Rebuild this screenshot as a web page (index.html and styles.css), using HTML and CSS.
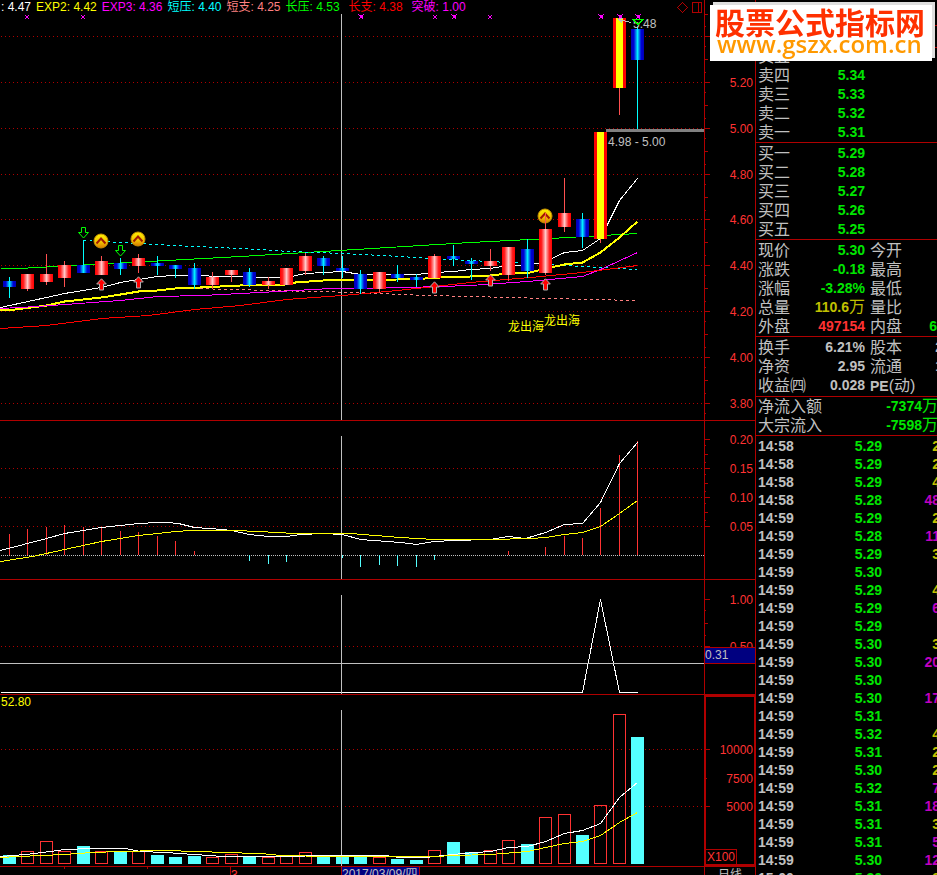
FILE: index.html
```html
<!DOCTYPE html>
<html lang="zh-CN">
<head>
<meta charset="utf-8">
<title>日线</title>
<link rel="stylesheet" href="styles.css">
</head>
<body>
<div class="app">
  <main class="charts">
    <section class="panel">
      <div class="legend">
        <span class="c-white">: 4.47</span>
        <span class="c-yellow">EXP2: 4.42</span>
        <span class="c-magenta">EXP3: 4.36</span>
        <span class="c-cyan">短压: 4.40</span>
        <span class="c-pink">短支: 4.25</span>
        <span class="c-lime">长压: 4.53</span>
        <span class="c-red legend-group">长支: 4.38</span>
        <span class="c-magenta legend-group">突破: 1.00</span>
      </div>
      <svg class="plot" id="price" viewBox="0 0 755 420">
        <defs>
          <linearGradient id="up">
            <stop offset="0" stop-color="#f00"/><stop offset=".2" stop-color="#ff2020"/>
            <stop offset=".5" stop-color="#ffc8c8"/>
            <stop offset=".8" stop-color="#ff2020"/><stop offset="1" stop-color="#f00"/>
          </linearGradient>
          <linearGradient id="down">
            <stop offset="0" stop-color="#0000b0"/><stop offset=".22" stop-color="#0000d8"/>
            <stop offset=".5" stop-color="#00f0ff"/>
            <stop offset=".78" stop-color="#0000d8"/><stop offset="1" stop-color="#0000b0"/>
          </linearGradient>
          <linearGradient id="gold" x2="0" y2="1">
            <stop offset="0" stop-color="#fff000"/><stop offset=".6" stop-color="#f0c000"/>
            <stop offset="1" stop-color="#d87800"/>
          </linearGradient>
          <symbol id="coin" viewBox="0 0 16 16">
            <circle cx="8" cy="8" r="7" fill="url(#gold)" stroke="#c89000"/>
            <path d="M3.500 10.500 8 5.500l4.500 5" fill="none" stroke="#a01800" stroke-width="2"/>
          </symbol>
          <symbol id="buy" viewBox="0 0 11 13">
            <path d="M5.500.8 10.300 6H7.500v6h-4V6H.7z" fill="#f00" stroke="#b0b0b0"/>
          </symbol>
          <symbol id="sell" viewBox="0 0 11 12">
            <path d="M3.500.5h4v5h3l-5 5.500-5-5.500h3z" fill="none" stroke="#0f0"/>
          </symbol>
        </defs>
      </svg>
    </section>
    <section class="panel"><svg class="plot" id="macd" viewBox="0 421 755 158"></svg></section>
    <section class="panel"><svg class="plot" id="signal" viewBox="0 580 755 114"></svg></section>
    <section class="panel">
      <div class="legend"><span class="c-yellow">52.80</span></div>
      <svg class="plot" id="volume" viewBox="0 695 755 171"></svg>
    </section>
    <svg class="plot" id="dates" viewBox="0 867 755 16"></svg>
  </main>

  <aside class="quote">
    <table class="book asks">
      <tr><th>卖五</th><td></td></tr>
      <tr><th>卖四</th><td>5.34</td></tr>
      <tr><th>卖三</th><td>5.33</td></tr>
      <tr><th>卖二</th><td>5.32</td></tr>
      <tr><th>卖一</th><td>5.31</td></tr>
    </table>
    <table class="book bids">
      <tr><th>买一</th><td>5.29</td></tr>
      <tr><th>买二</th><td>5.28</td></tr>
      <tr><th>买三</th><td>5.27</td></tr>
      <tr><th>买四</th><td>5.26</td></tr>
      <tr><th>买五</th><td>5.25</td></tr>
    </table>
    <div class="block">
      <table class="facts">
        <tr><th>现价</th><td>5.30</td><th>今开</th><td></td></tr>
        <tr><th>涨跌</th><td>-0.18</td><th>最高</th><td></td></tr>
        <tr><th>涨幅</th><td>-3.28%</td><th>最低</th><td></td></tr>
        <tr><th>总量</th><td class="v-yellow">110.6<span class="unit">万</span></td><th>量比</th><td></td></tr>
        <tr><th>外盘</th><td class="v-red">497154</td><th>内盘</th><td>6</td></tr>
      </table>
    </div>
    <div class="block block-ratios">
      <table class="facts neutral">
        <tr><th>换手</th><td>6.21%</td><th>股本</th><td class="clipped">2</td></tr>
        <tr><th>净资</th><td>2.95</td><th>流通</th><td class="clipped">1</td></tr>
        <tr><th>收益㈣</th><td>0.028</td><th><b>PE</b>(动)</th><td></td></tr>
      </table>
    </div>
    <div class="block block-flow">
      <table class="flow">
        <tr><th>净流入额</th><td>-7374<span class="unit">万</span></td></tr>
        <tr><th>大宗流入</th><td>-7598<span class="unit">万</span></td></tr>
      </table>
    </div>
    <table class="ticks"><tbody id="ticks"></tbody></table>

    <div class="brand">
      <div class="brand-name">股票公式指标网</div>
      <div class="brand-url">www.gszx.com.cn</div>
    </div>
  </aside>
</div>
<script src="script.js"></script>
</body>
</html>
```
FILE: styles.css
```css
* { box-sizing: border-box; }

body {
  margin: 0;
  background: #000;
  color: #c0c0c0;
  font-family: "Liberation Sans", "Noto Sans CJK SC", sans-serif;
  font-size: 12px;
}

.app {
  display: flex;
  height: 100vh;
  overflow: hidden;
}

.charts { flex: 1; min-width: 0; }

.panel {
  position: relative;
  border-bottom: 1px solid #b00000;
}

.plot {
  display: block;
  width: 100%;
  height: auto;
  shape-rendering: crispEdges;
}

.plot use { shape-rendering: auto; }

.legend {
  position: absolute;
  top: 0;
  left: 0;
  display: flex;
  gap: 5px;
  padding-left: 1px;
  line-height: 15px;
  white-space: nowrap;
}

.legend-group { margin-left: 4px; }

.c-white { color: #fff; }
.c-yellow { color: #ff0; }
.c-magenta { color: #f0f; }
.c-cyan { color: #0ff; }
.c-pink { color: #ff8080; }
.c-lime { color: #0f0; }
.c-red { color: #f00; }

/* Quote column */
.quote {
  position: relative;
  flex: 0 0 182px;
  overflow: hidden;
  border-left: 1px solid #b00000;
}

/* Rules of the title rows, seen at the edge of the brand plate */
.quote::before {
  content: "";
  position: absolute;
  top: 25px;
  left: 0;
  right: 0;
  height: 21px;
  border: solid #b00000;
  border-width: 1px 0;
}

table {
  table-layout: fixed;
  border-spacing: 0;
  margin-left: 2px;
}

th, td {
  height: 19px;
  padding: 0;
  line-height: 19px;
  white-space: nowrap;
}

th {
  font-size: 16px;
  font-weight: 400;
  text-align: left;
}

td {
  color: #00e600;
  font-size: 14px;
  font-weight: 700;
  text-align: right;
}

th b { font-size: 14px; line-height: 14px; }

.unit { font-size: 16px; font-weight: 400; line-height: 16px; }

.book { width: 107px; }

.asks { margin-top: 47px; }

.bids {
  position: relative;
  margin-top: 2px;
  margin-bottom: 0;
}

.bids::before {
  content: "";
  position: absolute;
  top: -2px;
  left: -2px;
  width: 100vw;
  border-top: 1px solid #b00000;
}

.block {
  padding-top: 1px;
  border-bottom: 1px solid #b00000;
}

.bids + .block { border-top: 1px solid #b00000; }

.block-ratios { padding-bottom: 1px; }

.block-flow { padding-top: 0; }

.facts { width: 185px; }
.facts th:first-child { width: 50px; }
.facts td:nth-child(2) { width: 57px; }
.facts th:nth-child(3) { width: 48px; padding-left: 5px; }
.facts td:nth-child(4) { padding-right: 6px; }
.facts td.clipped { padding-right: 0; }

.neutral td { color: #c0c0c0; }
.facts .v-yellow { color: #c0c000; }
.facts .v-red { color: #ff3232; }

.flow { width: 180px; }

.ticks { width: 182px; margin-top: 1px; }
.ticks td { height: 18px; line-height: 18px; }
.ticks td:nth-child(1) { width: 50px; color: #c0c0c0; text-align: left; }
.ticks td:nth-child(2) { width: 74px; }
.ticks .small { color: #c0c000; }
.ticks .large { color: #c000c0; }

/* Brand plate laid over the top of the quote column */
.brand {
  position: fixed;
  top: 5px;
  right: 5px;
  width: 222px;
  height: 56px;
  padding-left: 5px;
  background: #fff;
  box-shadow: 3px -3px 0 #dedede;
  font-weight: 700;
  white-space: nowrap;
}

.brand-name {
  color: #ff3000;
  font-family: "Noto Sans CJK SC", sans-serif;
  font-size: 30px;
  line-height: 32px;
}

.brand-url {
  padding-left: 2px;
  color: #ff9900;
  font-family: "Open Sans", sans-serif;
  font-size: 24px;
  font-weight: 600;
  line-height: 14px;
}
```
FILE: script.js
```js
const NS = "http://www.w3.org/2000/svg";
const RED = "#b00000";
const xs = [9, 27, 46, 64, 83, 101, 120, 138, 157, 175, 194, 212, 231, 249, 268, 286, 305, 323,
  342, 360, 379, 397, 416, 434, 453, 471, 490, 508, 527, 545, 564, 582, 600, 619, 637];

function add(parent, tag, attrs, text) {
  const el = document.createElementNS(NS, tag);
  for (const key in attrs) el.setAttribute(key, attrs[key]);
  if (text) el.textContent = text;
  parent.appendChild(el);
  return el;
}
const rect = (p, x, y, width, height, fill) => add(p, "rect", { x, y, width, height, fill });
const label = (p, x, y, text, fill, anchor = "start") =>
  add(p, "text", { x, y, fill, "font-size": 12, "text-anchor": anchor }, text);

function curve(p, points, stroke, width = 1, dash = "none") {
  const shifted = points.split(" ").map(q => q.split(",").map(v => Math.floor(+v) + 0.5).join(",")).join(" ");
  add(p, "polyline", { points: shifted, stroke, fill: "none", "stroke-width": width, "stroke-dasharray": dash });
}
function grid(p, levels) {
  for (const y of levels) {
    add(p, "line", { x1: 1, x2: 704, y1: y + 0.5, y2: y + 0.5, stroke: RED, "stroke-dasharray": "1 3" });
  }
}
function axis(p, top, bottom, labels, ticks) {
  rect(p, 704, top, 1, bottom - top, RED);
  for (const [y, text] of labels) {
    rect(p, 705, y, 5, 1, RED);
    label(p, 753, y + 5, text, "#ff3232", "end");
  }
  for (const [y, w] of ticks) rect(p, 705, y, w, 1, RED);
}

/* Price */
const price = document.getElementById("price");
const levels = [36, 82, 128, 174, 219, 265, 311, 357, 403];
grid(price, levels);
const minor = [[26, 1], [14, 3], [413, 1]];
levels.slice(0, -1).forEach(y => minor.push([y + 10, 1], [y + 23, 3], [y + 36, 1]));
axis(price, 0, 420, [[82, "5.20"], [128, "5.00"], [174, "4.80"], [219, "4.60"], [265, "4.40"],
  [311, "4.20"], [357, "4.00"], [403, "3.80"]], minor.concat([[36, 5]]));
rect(price, 341, 14, 1, 406, "#c0c0c0");

curve(price, "0,268 18,268 240,256 470,242 550,238 637,233", "#0f0");
curve(price, "83,240 120,242 157,244 194,246 240,248 290,251 342,253 400,256 430,258 470,260 508,262 545,264 582,266 637,269", "#0ff", 1, "3 3");
curve(price, "194,288 230,289 270,290 313,291 355,292 400,294 430,295 470,296 545,298 637,300", "#ff8080", 1, "3 3");
curve(price, "0,307 46,297 64,293 101,287 120,282 138,279 157,276 175,275 240,276 249,277 286,277 305,273 342,271 360,274 416,274 434,272 453,271 470,269 490,268 508,265 527,265 545,261 564,252 582,250 600,238 619,200 637,178", "#fff");
curve(price, "0,310 15,309 46,305 64,301 83,299 101,297 120,294 138,291 157,290 175,288 200,287 240,285 285,284 295,282 323,280 397,279 425,278 440,277 470,276 490,275 508,273 530,272 545,268 564,264 582,262 600,252 619,237 637,221", "#ff0", 2);
curve(price, "0,308 37,306 92,302 120,300 157,296 202,295 240,293 278,291 330,288 360,288 405,287 440,286 470,285 527,281 582,276 600,269 637,252", "#f0f");
curve(price, "0,328 46,325 101,318 148,315 194,309 240,305 286,299 342,295 397,290 434,286 470,282 530,277 582,272 637,265", "#f00");

/* kind, high, body top, body bottom, low */
const candles = [
  ["d", 277, 281, 287, 298], ["u", 274, 274, 289, 291], ["u", 254, 274, 282, 285], ["u", 261, 265, 278, 287],
  ["d", 240, 265, 273, 273], ["u", 256, 261, 275, 275], ["d", 258, 263, 269, 275], ["u", 254, 258, 266, 273],
  ["d", 256, 263, 266, 275], ["d", 265, 265, 269, 278], ["d", 263, 268, 285, 289], ["u", 272, 277, 285, 289],
  ["u", 270, 270, 275, 282], ["d", 268, 272, 285, 287], ["u", 277, 281, 285, 289], ["u", 268, 268, 285, 285],
  ["u", 253, 256, 271, 275], ["d", 256, 258, 266, 275], ["d", 256, 268, 271, 278], ["d", 270, 274, 289, 294],
  ["u", 272, 272, 289, 293], ["d", 265, 274, 278, 282], ["d", 274, 277, 280, 287], ["u", 254, 256, 278, 278],
  ["d", 245, 256, 259, 266], ["d", 258, 261, 264, 280], ["u", 249, 261, 266, 271], ["u", 247, 247, 275, 281],
  ["d", 239, 249, 271, 278], ["u", 213, 229, 273, 275], ["u", 178, 213, 227, 232], ["d", 213, 219, 237, 248],
  ["b", 132, 132, 239, 243], ["b", 18, 18, 88, 115], ["d", 26, 29, 60, 129]];

for (const [x, y] of [[101, 241], [138, 239], [545, 216]]) {
  add(price, "use", { href: "#coin", x: x - 8, y: y - 8, width: 16, height: 16 });
}
candles.forEach(([kind, high, top, bottom, low], i) => {
  const x = xs[i];
  rect(price, x, high, 1, low - high, kind === "d" ? "#00ffff" : "#ff5050");
  if (kind === "b") {
    rect(price, x - 6, top, 13, bottom - top, "#f00");
    rect(price, x - 3, top, 7, bottom - top, "#ff0");
  } else {
    rect(price, x - 6, top, 13, bottom - top, kind === "d" ? "url(#down)" : "url(#up)");
  }
});
for (const [x, y] of [[101, 278], [138, 276], [434, 281], [490, 274], [545, 278]]) {
  add(price, "use", { href: "#buy", x: x - 5, y, width: 11, height: 13 });
}
for (const [x, y] of [[83, 227], [120, 245]]) {
  add(price, "use", { href: "#sell", x: x - 5, y, width: 11, height: 12 });
}
for (const [x, strong] of [[27, 0], [83, 0], [361, 1], [435, 0], [454, 1], [490, 0], [601, 1], [620, 1], [638, 1]]) {
  const r = strong ? 2.5 : 2;
  add(price, "path", { d: `M${x - r} ${17 - r}l${2 * r} ${2 * r}m0-${2 * r}l-${2 * r} ${2 * r}`, stroke: "#f0f", fill: "none" });
  if (strong) rect(price, x - 1, 15, 3, 3, "#f0f");
}
rect(price, 606, 129, 98, 3, "#808080");
label(price, 608, 146, "4.98 - 5.00", "#c0c0c0");
add(price, "path", { d: "M631 22.500 619 19.500M623 18l-4 1.500 3 3", stroke: "#c0c0c0", fill: "none" });
label(price, 633, 28, "5.48", "#c0c0c0");
add(price, "path", { d: "M633 19.500h10l-5 5z", stroke: "#0f0", fill: "none" });
label(price, 508, 331, "龙出海", "#ff0");
label(price, 544, 325, "龙出海", "#ff0");
add(price, "path", { d: "M682.500 2.500l5 5-5 5-5-5zM692.500 2.500h9v10h-9zM698.500 2.500v10", stroke: RED, fill: "none" });

/* MACD */
const macd = document.getElementById("macd");
grid(macd, [468, 497, 526]);
axis(macd, 421, 579, [[439, "0.20"], [468, "0.15"], [497, "0.10"], [526, "0.05"]],
  [[445, 1], [454, 3], [462, 1], [474, 1], [483, 3], [491, 1], [503, 1], [512, 3], [520, 1]]);
add(macd, "line", { x1: 1, x2: 704, y1: 555.5, y2: 555.5, stroke: "#c0c0c0", "stroke-dasharray": "1 1" });
rect(macd, 341, 436, 1, 143, "#c0c0c0");
const bars = [534, 529, 527, 525, 527, 527, 531, 532, 536, 541, 551, 0, 0, 561, 564, 562, 0, 0,
  558, 567, 565, 566, 567, 560, 0, 0, 0, 551, 0, 547, 536, 538, 508, 455, 441];
bars.forEach((y, i) => {
  if (!y) return;
  if (y < 555) rect(macd, xs[i], y, 1, 555 - y, "#ff3232");
  else rect(macd, xs[i], 555, 1, y - 555, "#54ffff");
});
curve(macd, "0,550 46,538 64,533 101,527 138,523 157,522 166,522 178,523 194,527 222,529 231,530 249,534 268,536 286,536 300,534 323,533 342,534 360,539 400,542 416,544 434,541 453,540 490,539 508,536 525,538 545,532 564,524 582,523 600,502 619,463 637,442", "#fff");
curve(macd, "0,561 32,556 64,549 101,541 138,535 157,533 175,531 190,530 235,530 258,531 295,533 350,533 400,537 434,539 490,539 530,538 545,537 564,534 582,532 600,526 619,513 637,500", "#ff0");

/* Signal */
const signal = document.getElementById("signal");
grid(signal, [646]);
axis(signal, 580, 694, [[599, "1.00"], [646, "0.50"]], [[610, 1], [623, 3], [635, 1]]);
curve(signal, "0,692 582,692 600,599 619,692 637,692", "#fff");
rect(signal, 341, 595, 1, 99, "#c0c0c0");
rect(signal, 0, 663, 704, 1, "#c0c0c0");
rect(signal, 705, 647, 50, 17, RED);
rect(signal, 705, 648, 50, 15, "#000080");
label(signal, 705, 659, "0.31", "#c0c0c0");

/* Volume */
const volume = document.getElementById("volume");
grid(volume, [749, 806]);
axis(volume, 695, 866, [[749, "10000"], [806, "5000"]], [[778, 2]]);
label(volume, 753, 783, "7500", "#ff3232", "end");
add(volume, "rect", { x: 705, y: 696, width: 50, height: 169, fill: "none", stroke: RED, "stroke-width": 2 });
add(volume, "path", { d: "M705 849.500h31.500v15", stroke: RED, fill: "none" });
label(volume, 707, 861, "X100", "#ff3232");
const vols = [-855, 851, 841, 851, -846, 851, -852, 851, -855, -857, -856, 857, 854, -857, 857, 856, 852, -857,
  -857, -855, 857, -859, -860, 850, -842, -852, 850, 840, -844, 817, 814, -835, 805, 714, -737];
vols.forEach((v, i) => {
  const x = xs[i] - 6, y = Math.abs(v);
  if (v < 0) rect(volume, x, y, 13, 864 - y, "#54ffff");
  else add(volume, "rect", { x: x + 0.5, y: y + 0.5, width: 12, height: 863 - y, fill: "none", stroke: "#ff3232" });
});
rect(volume, 341, 710, 1, 156, "#c0c0c0");
curve(volume, "0,856 25,854 50,851 64,849 92,848 125,848 140,851 165,852 194,854 222,856 295,856 315,855 384,855 400,857 425,857 434,856 462,853 490,851 508,847 527,846 545,841 564,833 582,830 600,823 619,797 637,782", "#fff");
curve(volume, "0,857 18,856 64,854 92,852 120,851 160,850 200,851 222,852 260,853 280,855 330,856 434,856 453,855 490,854 527,851 545,847 564,843 582,841 600,835 619,822 637,812", "#ff0");

/* Dates */
const dates = document.getElementById("dates");
for (const [x, h] of [[64, 2], [147, 2], [230, 16], [704, 16]]) rect(dates, x, 867, 1, h, RED);
label(dates, 231, 879, "3", "#ff3232");
rect(dates, 341, 867, 79, 16, RED);
rect(dates, 342, 867, 77, 16, "#000080");
label(dates, 342, 878, "2017/03/09/四", "#c0c0c0");
label(dates, 730, 879, "日线", "#c0c0c0", "middle");

/* Time and sales: time, price, lots */
const trades = [["14:58", "5.29", 2], ["14:58", "5.29", 2], ["14:58", "5.29", 4], ["14:58", "5.28", 48, 1],
  ["14:59", "5.29", 2], ["14:59", "5.28", 11, 1], ["14:59", "5.29", 3], ["14:59", "5.30", ""],
  ["14:59", "5.29", 4], ["14:59", "5.29", 6, 1], ["14:59", "5.29", ""], ["14:59", "5.30", 3],
  ["14:59", "5.30", 20, 1], ["14:59", "5.30", ""], ["14:59", "5.30", 17, 1], ["14:59", "5.31", ""],
  ["14:59", "5.32", 4], ["14:59", "5.31", 2], ["14:59", "5.30", 2], ["14:59", "5.32", 7, 1],
  ["14:59", "5.31", 18, 1], ["14:59", "5.31", 3], ["14:59", "5.31", 5, 1], ["14:59", "5.30", 12, 1],
  ["15:00", "5.30", 9]];
document.getElementById("ticks").innerHTML = trades.map(([time, cost, lots, large]) =>
  `<tr><td>${time}</td><td>${cost}</td><td class="${large ? "large" : "small"}">${lots}</td></tr>`).join("");
```
